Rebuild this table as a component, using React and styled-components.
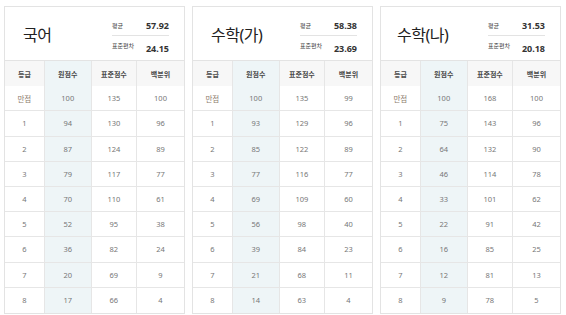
import React from "react";
import styled, { createGlobalStyle } from "styled-components";

const GlobalStyle = createGlobalStyle`
    body {
        margin: 0;
        background: #fff;
        font-family: "Noto Sans", "Noto Sans CJK KR", sans-serif;
    }
`;

const Board = styled.div`
    display: flex;
    gap: 7px;
    padding: 6px 0 0 4px;
`;

const Card = styled.section`
    width: 181px;
    border: 1px solid #e3e3e3;
    box-sizing: border-box;
    background: #fff;
`;

const CardHead = styled.header`
    height: 53px;
    display: flex;
    align-items: center;
    justify-content: space-between;
    padding: 0 15px 0 ${p => p.$titleGap}px;
    border-bottom: 1px solid #e3e3e3;
`;

const Title = styled.h2`
    margin: 0;
    font-size: 16px;
    font-weight: 400;
    color: #222;
    letter-spacing: -0.5px;
`;

const Stats = styled.div`
    margin-top: 4px;
    width: 57px;
    flex: none;
    display: flex;
    flex-direction: column;
`;

const StatRow = styled.div`
    height: 19px;
    display: flex;
    align-items: ${p => (p.$line ? "center" : "flex-end")};
    justify-content: space-between;
    border-bottom: ${p => (p.$line ? "1px solid #e3e3e3" : "none")};
    box-sizing: border-box;
`;

const StatLabel = styled.span`
    font-size: 6px;
    color: #444;
    white-space: nowrap;
    align-self: center;
`;

const StatValue = styled.strong`
    font-size: 9px;
    font-weight: 700;
    color: #333;
`;

const Grid = styled.div`
    display: grid;
    grid-template-columns: 22fr 26fr 25fr 26fr;
    grid-auto-rows: 25.2px;
`;

const Cell = styled.div`
    display: flex;
    align-items: center;
    justify-content: center;
    font-size: 7.5px;
    color: ${p => (p.$top ? "#8c7b6d" : "#777")};
    background: ${p => (p.$raw ? "#eef5f7" : p.$head ? "#f7f7f7" : "#fff")};
    border-bottom: ${p => (p.$last ? "none" : "1px solid #e6e6e6")};
    border-right: ${p => (p.$end ? "none" : "1px solid #e6e6e6")};
    box-sizing: border-box;
`;

const HeadCell = styled(Cell)`
    height: 26px;
    color: #4a4a4a;
    font-weight: 700;
    font-size: 7px;
`;

const subjects = [
    {
        name: "국어",
        gap: 18,
        mean: "57.92",
        sd: "24.15",
        rows: [
            ["만점", 100, 135, 100],
            [1, 94, 130, 96],
            [2, 87, 124, 89],
            [3, 79, 117, 77],
            [4, 70, 110, 61],
            [5, 52, 95, 38],
            [6, 36, 82, 24],
            [7, 20, 69, 9],
            [8, 17, 66, 4],
        ],
    },
    {
        name: "수학(가)",
        gap: 18,
        mean: "58.38",
        sd: "23.69",
        rows: [
            ["만점", 100, 135, 99],
            [1, 93, 129, 96],
            [2, 85, 122, 89],
            [3, 77, 116, 77],
            [4, 69, 109, 60],
            [5, 56, 98, 40],
            [6, 39, 84, 23],
            [7, 21, 68, 11],
            [8, 14, 63, 4],
        ],
    },
    {
        name: "수학(나)",
        gap: 16,
        mean: "31.53",
        sd: "20.18",
        rows: [
            ["만점", 100, 168, 100],
            [1, 75, 143, 96],
            [2, 64, 132, 90],
            [3, 46, 114, 78],
            [4, 33, 101, 62],
            [5, 22, 91, 42],
            [6, 16, 85, 25],
            [7, 12, 81, 13],
            [8, 9, 78, 5],
        ],
    },
];

const heads = ["등급", "원점수", "표준점수", "백분위"];

function ScoreCard({ subject }) {
    const last = subject.rows.length - 1;
    return (
        <Card>
            <CardHead $titleGap={subject.gap}>
                <Title>{subject.name}</Title>
                <Stats>
                    <StatRow $line>
                        <StatLabel>평균</StatLabel>
                        <StatValue>{subject.mean}</StatValue>
                    </StatRow>
                    <StatRow>
                        <StatLabel>표준편차</StatLabel>
                        <StatValue>{subject.sd}</StatValue>
                    </StatRow>
                </Stats>
            </CardHead>
            <Grid>
                {heads.map((h, i) => (
                    <HeadCell key={h} $head $raw={i === 1} $end={i === 3}>
                        {h}
                    </HeadCell>
                ))}
                {subject.rows.map((row, r) =>
                    row.map((v, i) => (
                        <Cell
                            key={r + "-" + i}
                            $raw={i === 1}
                            $end={i === 3}
                            $last={r === last}
                            $top={r === 0 && i === 0}
                        >
                            {v}
                        </Cell>
                    ))
                )}
            </Grid>
        </Card>
    );
}

export default function App() {
    return (
        <>
            <GlobalStyle />
            <Board>
                {subjects.map(s => (
                    <ScoreCard key={s.name} subject={s} />
                ))}
            </Board>
        </>
    );
}
